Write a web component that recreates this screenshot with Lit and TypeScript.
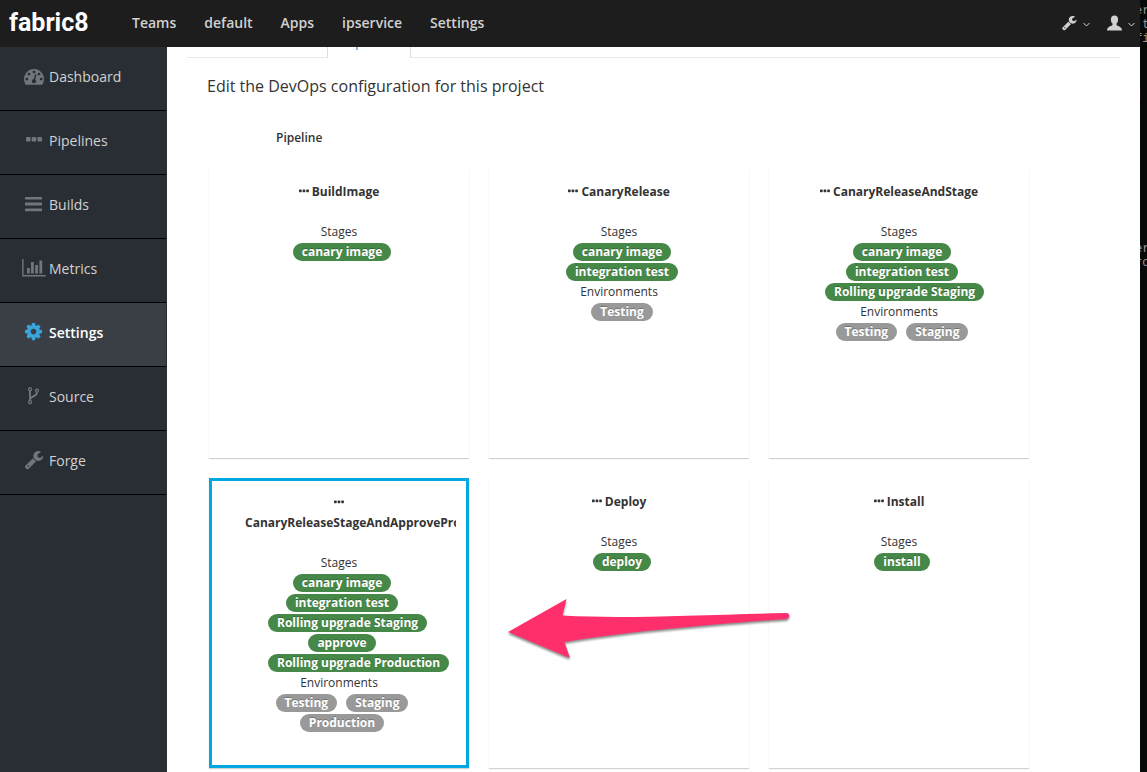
import { LitElement, html, svg, css, nothing, type SVGTemplateResult } from "lit";
import { customElement, property, state } from "lit/decorators.js";

const WRENCH =
  "M448 1472q0-26-19-45t-45-19-45 19-19 45 19 45 45 19 45-19 19-45zm644-420l-682 682q-37 37-90 37-52 0-91-37l-106-108q-38-36-38-90 0-53 38-91l681-681q39 98 114.5 173.5t173.5 114.5zm634-435q0 39-23 106-47 134-164.5 217.5t-258.5 83.5q-185 0-316.5-131.5t-131.5-316.5 131.5-316.5 316.5-131.5q58 0 121.5 16.5t107.5 46.5q16 11 16 28t-16 28l-293 169v224l193 107q5-3 79-48.5t135.5-81 70.5-35.5q15 0 23.5 10t8.5 25z";
const GAUGE =
  "M384 1152q0-53-37.5-90.5t-90.5-37.5-90.5 37.5-37.5 90.5 37.5 90.5 90.5 37.5 90.5-37.5 37.5-90.5zm192-448q0-53-37.5-90.5t-90.5-37.5-90.5 37.5-37.5 90.5 37.5 90.5 90.5 37.5 90.5-37.5 37.5-90.5zm428 481l101-382q6-26-7.5-48.5t-38.5-29.5-48 6.5-30 39.5l-101 382q-60 5-107 43.5t-63 98.5q-20 77 20 146t117 89 146-20 89-117q16-60-6-117t-72-91zm660-33q0-53-37.5-90.5t-90.5-37.5-90.5 37.5-37.5 90.5 37.5 90.5 90.5 37.5 90.5-37.5 37.5-90.5zm-640-640q0-53-37.5-90.5t-90.5-37.5-90.5 37.5-37.5 90.5 37.5 90.5 90.5 37.5 90.5-37.5 37.5-90.5zm448 192q0-53-37.5-90.5t-90.5-37.5-90.5 37.5-37.5 90.5 37.5 90.5 90.5 37.5 90.5-37.5 37.5-90.5zm320 448q0 261-141 483-19 29-54 29h-1402q-35 0-54-29-141-221-141-483 0-182 71-348t191-286 286-191 348-71 348 71 286 191 191 286 71 348z";
const COG =
  "M1152 896q0-106-75-181t-181-75-181 75-75 181 75 181 181 75 181-75 75-181zm512-109v222q0 12-8 23t-20 13l-185 28q-19 54-39 91 35 50 107 138 10 12 10 25t-9 23q-27 37-99 108t-94 71q-12 0-26-9l-138-108q-44 23-91 38-16 136-29 186-7 28-36 28h-222q-14 0-24.5-8.5t-11.5-21.5l-28-184q-49-16-90-37l-141 107q-10 9-25 9-14 0-25-11-126-114-165-168-7-10-7-23 0-12 8-23 15-21 51-66.5t54-70.5q-27-50-41-99l-183-27q-13-2-21-12.5t-8-23.5v-222q0-12 8-23t19-13l186-28q14-46 39-92-40-57-107-138-10-12-10-24 0-10 9-23 26-36 98.5-107.5t94.5-71.5q13 0 26 10l138 107q44-23 91-38 16-136 29-186 7-28 36-28h222q14 0 24.5 8.5t11.5 21.5l28 184q49 16 90 37l142-107q9-9 24-9 13 0 25 10 129 119 165 170 7 8 7 22 0 12-8 23-15 21-51 66.5t-54 70.5q26 50 41 98l183 28q13 2 21 12.5t8 23.5z";

interface NavItem {
  label: string;
  icon: SVGTemplateResult;
}

const NAV: NavItem[] = [
  { label: "Dashboard", icon: svg`<path transform="translate(2 1.2) scale(.01116)" d=${GAUGE} />` },
  {
    label: "Pipelines",
    icon: svg`<rect x="4" y="8" width="4.6" height="4.6" rx="1"/><rect x="9.7" y="8" width="4.6" height="4.6" rx="1"/><rect x="15.4" y="8" width="4.6" height="4.6" rx="1"/>`,
  },
  {
    label: "Builds",
    icon: svg`<rect x="3" y="4" width="17" height="2.6" rx=".5"/><rect x="3" y="9.6" width="17" height="2.8" rx=".5"/><rect x="3" y="15.4" width="17" height="2.8" rx=".5"/>`,
  },
  {
    label: "Metrics",
    icon: svg`<path d="M.2 2h1.4v16h22v1.4H.2z"/><path d="M5 11h2.8v5.6H5zM9 5h2.8v11.6H9zM13.2 8H16v8.6h-2.8zM17.4 3.4h2.8v13.2h-2.8z"/>`,
  },
  { label: "Settings", icon: svg`<path transform="translate(1.5 .6) scale(.01116)" d=${COG} />` },
  {
    label: "Source",
    icon: svg`<g fill="none" stroke="currentColor" stroke-width="1.3"><circle cx="8" cy="4.2" r="1.5"/><circle cx="8" cy="17.2" r="1.5"/><circle cx="15" cy="5.6" r="1.5"/></g><path fill="none" stroke="currentColor" stroke-width="1.9" d="M8 5.8v9.8M15 7.2c0 4.6-6.2 3.6-7 7.2"/>`,
  },
  { label: "Forge", icon: svg`<path transform="translate(2 .6) scale(.01116)" d=${WRENCH} />` },
];

interface Pipeline {
  name: string;
  stages: string[];
  environments: string[];
}

const PIPELINES: Pipeline[] = [
  { name: "BuildImage", stages: ["canary image"], environments: [] },
  { name: "CanaryRelease", stages: ["canary image", "integration test"], environments: ["Testing"] },
  {
    name: "CanaryReleaseAndStage",
    stages: ["canary image", "integration test", "Rolling upgrade Staging"],
    environments: ["Testing", "Staging"],
  },
  {
    name: "CanaryReleaseStageAndApprovePromote",
    stages: ["canary image", "integration test", "Rolling upgrade Staging", "approve", "Rolling upgrade Production"],
    environments: ["Testing", "Staging", "Production"],
  },
  { name: "Deploy", stages: ["deploy"], environments: [] },
  { name: "Install", stages: ["install"], environments: [] },
];

@customElement("pipeline-card")
export class PipelineCard extends LitElement {
  @property({ attribute: false }) pipeline!: Pipeline;
  @property({ type: Boolean }) selected = false;

  static styles = css`
    .card {
      display: flex;
      flex-direction: column;
      box-sizing: border-box;
      width: 100%;
      height: 290px;
      margin: 0;
      padding: 12px 10px 0;
      border: 0 solid transparent;
      border-top-width: 2px;
      background: #fff;
      box-shadow: 0 1px 1px rgba(0, 0, 0, 0.175);
      color: #333;
      font: 12px/20px "Open Sans", sans-serif;
      text-align: center;
      cursor: pointer;
    }
    .card.selected {
      border: 3px solid #00a8e1;
    }
    .body,
    .title,
    .caption,
    .tags {
      display: block;
    }
    .body {
      overflow: hidden;
    }
    .title {
      padding: 0 23px;
      margin-bottom: 20px;
      font-weight: 700;
    }
    .dots {
      width: 10px;
      height: 4px;
      vertical-align: 3px;
      fill: currentColor;
    }
    .tags {
      padding: 0 40px;
    }
    .badge {
      display: inline-block;
      margin: 1px 0 1px 6px;
      padding: 0 9px;
      border-radius: 9px;
      background: #468847;
      color: #fff;
      font-weight: 700;
      line-height: 18px;
      vertical-align: top;
      white-space: nowrap;
      text-shadow: 0 -1px 0 rgba(0, 0, 0, 0.25);
    }
    .badge.env {
      background: #999;
    }
  `;

  private group(caption: string, items: string[], kind: string) {
    if (!items.length) return nothing;
    return html`<span class="caption">${caption}</span>
      <span class="tags">${items.map((t) => html`<span class="badge ${kind}">${t}</span> `)}</span>`;
  }

  render() {
    const p = this.pipeline;
    return html`<button class="card ${this.selected ? "selected" : ""}" aria-pressed=${this.selected}>
      <span class="body">
        <span class="title"
          ><svg class="dots" viewBox="0 0 10 4" aria-hidden="true">
            <rect y=".5" width="2.7" height="2.7" rx=".6" />
            <rect x="3.6" y=".5" width="2.7" height="2.7" rx=".6" />
            <rect x="7.2" y=".5" width="2.7" height="2.7" rx=".6" /></svg
          > ${p.name}</span
        >
        ${this.group("Stages", p.stages, "stage")} ${this.group("Environments", p.environments, "env")}
      </span>
    </button>`;
  }
}

@customElement("app-root")
export class AppRoot extends LitElement {
  @state() private selected = 3;

  static styles = css`
    :host {
      display: flex;
      height: 100vh;
      overflow: hidden;
      background: #fff;
      color: #333;
      font: 14px/24px "Open Sans", sans-serif;
    }
    a {
      color: inherit;
      text-decoration: none;
    }
    .window {
      flex: 1;
      min-width: 0;
      display: flex;
      flex-direction: column;
    }
    .topbar {
      flex: none;
      box-sizing: border-box;
      display: flex;
      align-items: center;
      height: 47px;
      padding: 0 5px 2px 9px;
      background: #1d1d1d;
      color: #d1d1d1;
    }
    .brand {
      width: 109px;
      color: #fff;
      font: 700 25px/44px "Roboto", sans-serif;
    }
    .menu {
      flex: 1;
      display: flex;
    }
    .menu a {
      padding: 0 14px;
      font-weight: 600;
    }
    .tools {
      display: flex;
      gap: 17px;
    }
    .tool {
      display: flex;
      align-items: center;
      gap: 6px;
      padding: 0;
      border: 0;
      background: none;
      color: inherit;
      cursor: pointer;
    }
    .tool-icon {
      width: 15px;
      height: 16px;
      fill: currentColor;
    }
    .chevron {
      width: 7px;
      height: 6px;
      padding-top: 2px;
      fill: none;
      stroke: currentColor;
    }
    .columns {
      flex: 1;
      min-height: 0;
      display: flex;
    }
    .sidebar {
      flex: none;
      width: 166px;
      border-right: 1px solid #292e34;
      background: #292e34;
      color: #d1d1d1;
    }
    .sidebar a {
      display: flex;
      gap: 3px;
      padding: 18px 22px 21px;
      border-bottom: 1px solid #000;
    }
    .sidebar .active {
      background: #393f44;
      color: #fff;
      font-weight: 600;
    }
    .nav-icon {
      width: 24px;
      height: 24px;
      color: #72767b;
      fill: currentColor;
    }
    .active .nav-icon {
      color: #39a5dc;
    }
    main {
      flex: 1;
      min-width: 0;
      overflow: hidden;
      padding: 0 20px;
    }
    .tabs {
      display: flex;
      align-items: flex-end;
      height: 11px;
      overflow: hidden;
    }
    .tabs::before,
    .tabs::after {
      content: "";
      width: 140px;
      border-bottom: 1px solid #e9e9e9;
    }
    .tabs::after {
      flex: 1;
    }
    .tab {
      padding: 4px 15px 5px;
      border: solid #ddd;
      border-width: 0 1px;
      color: #0099d3;
    }
    h1 {
      margin: 16px 20px 0;
      font-size: 16px;
      font-weight: 400;
      line-height: 24px;
    }
    h2 {
      margin: 30px 89px 20px;
      font-size: 12px;
      font-weight: 600;
      line-height: 20px;
    }
    .cards {
      display: grid;
      grid-template-columns: repeat(auto-fill, 260px);
      gap: 20px;
      padding-left: 22px;
    }
    .slot {
      position: relative;
    }
    .pointer {
      position: absolute;
      left: 295px;
      top: 116px;
      width: 290px;
      height: 72px;
      z-index: 1;
      pointer-events: none;
      filter: drop-shadow(0 2px 1px rgba(0, 0, 0, 0.45));
    }
    .terminal {
      flex: none;
      width: 7px;
      overflow: hidden;
      background: #080909;
      color: #999;
    }
    .terminal pre {
      margin: 4px 0 0 -5px;
      font: 12px/14px "Liberation Mono", monospace;
    }
  `;

  private chevron() {
    return html`<svg class="chevron" viewBox="0 0 7 6" aria-hidden="true"><path d="M.5 2l3 3 3-3" /></svg>`;
  }

  render() {
    const log = ["er", " t", "fi", "", "", "", "]", ...Array(10).fill(""), "er", "ro"].join("\n");
    return html`
      <div class="window">
        <header class="topbar">
          <a class="brand" href="#">fabric8</a>
          <nav class="menu" aria-label="Main">
            ${["Teams", "default", "Apps", "ipservice", "Settings"].map((t) => html`<a href="#">${t}</a>`)}
          </nav>
          <div class="tools">
            <button class="tool" aria-label="Tools">
              <svg class="tool-icon" viewBox="60 60 1710 1760"><path d=${WRENCH} /></svg>${this.chevron()}
            </button>
            <button class="tool" aria-label="Account">
              <svg class="tool-icon" viewBox="0 0 15 16">
                <path d="M7.5.5c2.3 0 3.6 1.600 3.600 3.900 0 1.700-.6 3.300-1.600 4.200v1.500c.3 1 5.500 1.500 5.500 5.400H0c0-3.900 5.200-4.400 5.500-5.400V8.600c-1-.9-1.600-2.500-1.600-4.200C3.900 2.100 5.200.5 7.500.5z" /></svg
              >${this.chevron()}
            </button>
          </div>
        </header>
        <div class="columns">
          <nav class="sidebar" aria-label="Project">
            ${NAV.map(
              (n) => html`<a href="#" class=${n.label === "Settings" ? "active" : ""}
                ><svg class="nav-icon" viewBox="0 0 24 24" aria-hidden="true">${n.icon}</svg>${n.label}</a
              >`,
            )}
          </nav>
          <main>
            <div class="tabs"><a class="tab" href="#">Pipeline</a></div>
            <h1>Edit the DevOps configuration for this project</h1>
            <h2>Pipeline</h2>
            <div class="cards">
              ${PIPELINES.map(
                (p, i) => html`<div class="slot">
                  <pipeline-card
                    .pipeline=${p}
                    .selected=${i === this.selected}
                    @click=${() => (this.selected = i)}
                  ></pipeline-card>
                  ${i === this.selected
                    ? html`<svg class="pointer" viewBox="0 0 290 72" aria-hidden="true">
                        <path
                          fill="#ff2f6c"
                          d="M4 38L62.500 5l-4 16.500C120 25 190 21 282 19c4.500 0 4.500 5.500 0 6C200 31 120 38 60.500 48l5.500 16z"
                        />
                      </svg>`
                    : nothing}
                </div>`,
              )}
            </div>
          </main>
        </div>
      </div>
      <aside class="terminal" aria-hidden="true"><pre>${log}</pre></aside>
    `;
  }
}
